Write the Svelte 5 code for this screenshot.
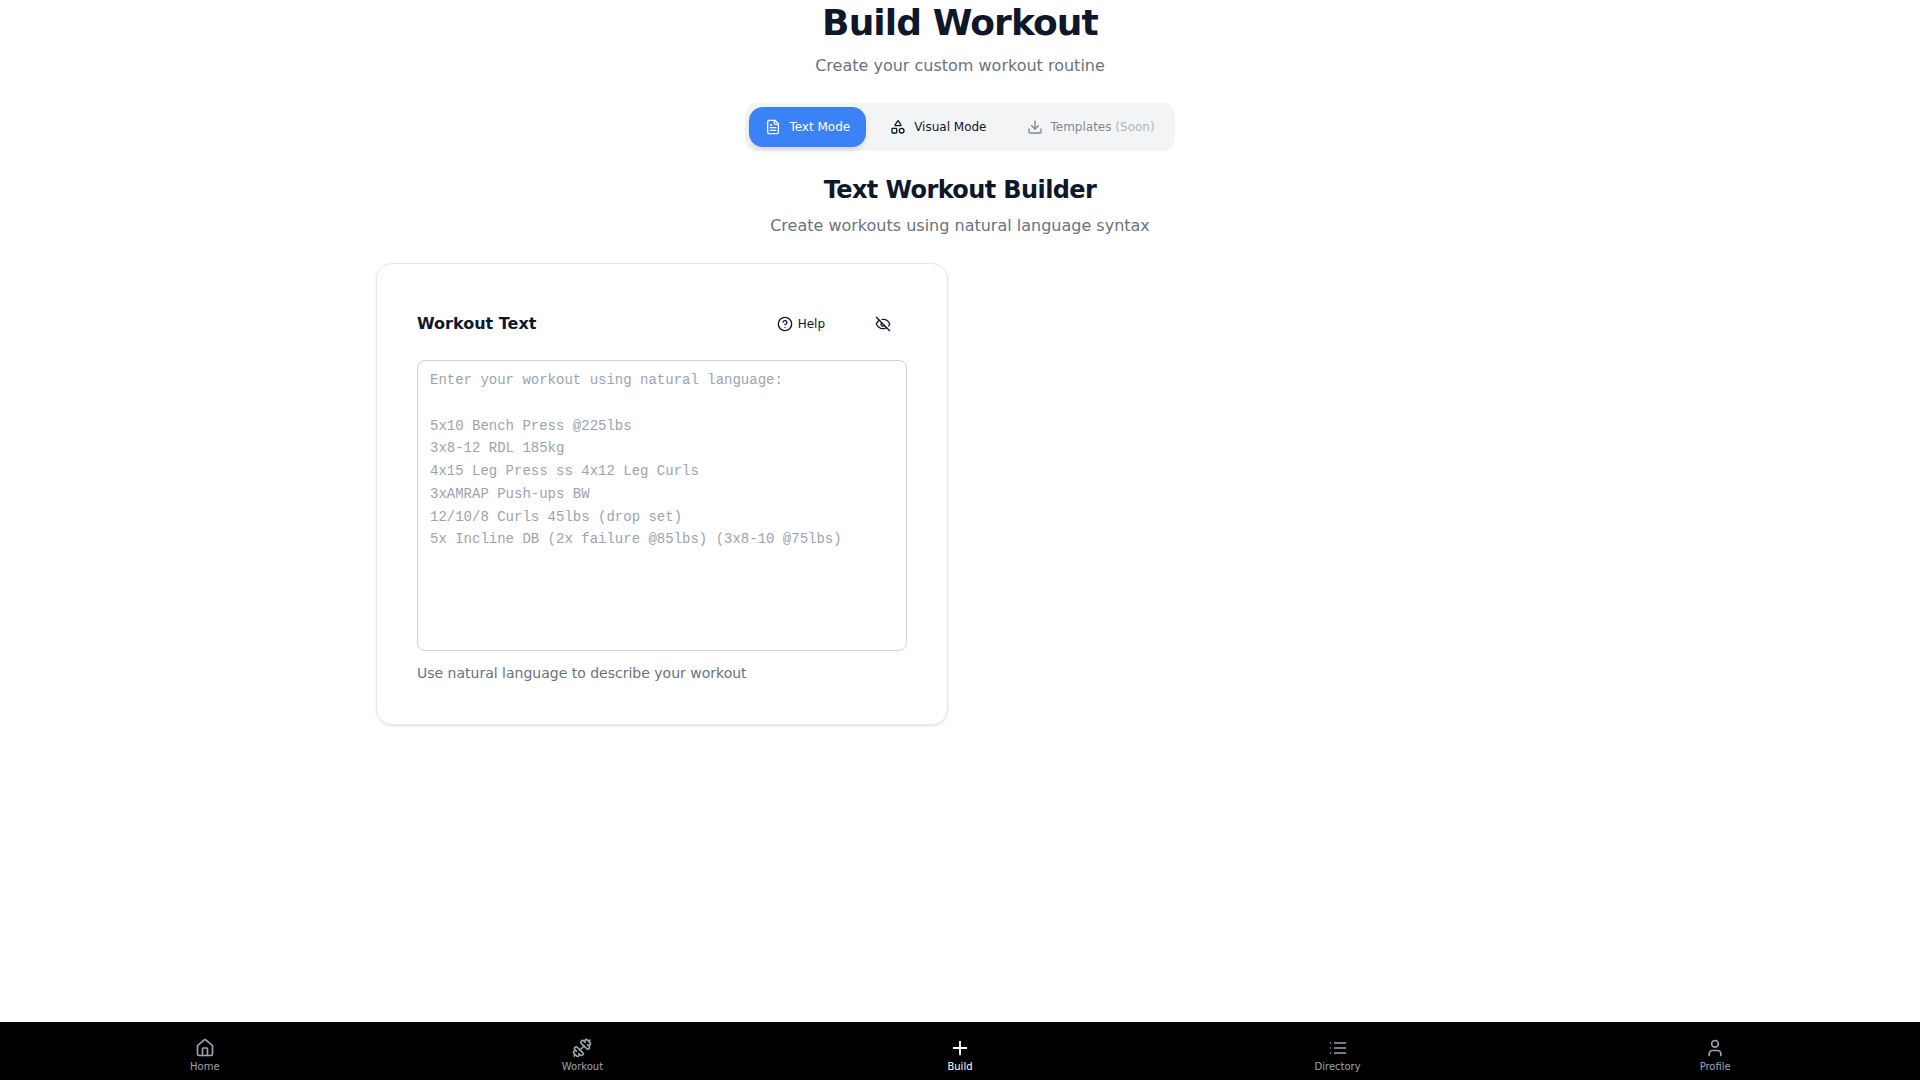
<script>
  let mode = $state('text');
  let workout = $state('');
  const example = [
    'Enter your workout using natural language:',
    '',
    '5x10 Bench Press @225lbs',
    '3x8-12 RDL 185kg',
    '4x15 Leg Press ss 4x12 Leg Curls',
    '3xAMRAP Push-ups BW',
    '12/10/8 Curls 45lbs (drop set)',
    '5x Incline DB (2x failure @85lbs) (3x8-10 @75lbs)',
  ].join('\n');

  const nav = [
    { label: 'Home', icon: 'home' },
    { label: 'Workout', icon: 'dumbbell' },
    { label: 'Build', icon: 'plus' },
    { label: 'Directory', icon: 'list' },
    { label: 'Profile', icon: 'user' },
  ];

  const icons = {
    file: ['M15 2H6a2 2 0 0 0-2 2v16a2 2 0 0 0 2 2h12a2 2 0 0 0 2-2V7Z', 'M14 2v4a2 2 0 0 0 2 2h4', 'M10 9H8', 'M16 13H8', 'M16 17H8'],
    shapes: ['M8.3 10a.7.7 0 0 1-.626-1.079L11.4 3a.7.7 0 0 1 1.198-.043L16.3 8.9a.7.7 0 0 1-.572 1.1Z', 'M4 14h5a1 1 0 0 1 1 1v5a1 1 0 0 1-1 1H4a1 1 0 0 1-1-1v-5a1 1 0 0 1 1-1Z', 'M14 17.5a3.5 3.5 0 1 0 7 0a3.5 3.5 0 1 0-7 0'],
    download: ['M21 15v4a2 2 0 0 1-2 2H5a2 2 0 0 1-2-2v-4', 'm7 10 5 5 5-5', 'M12 15V3'],
    help: ['M2 12a10 10 0 1 0 20 0a10 10 0 1 0-20 0', 'M9.09 9a3 3 0 0 1 5.83 1c0 2-3 3-3 3', 'M12 17h.01'],
    eyeOff: ['M10.733 5.076a10.744 10.744 0 0 1 11.205 6.575 1 1 0 0 1 0 .696 10.747 10.747 0 0 1-1.444 2.49', 'M14.084 14.158a3 3 0 0 1-4.242-4.242', 'M17.479 17.499a10.75 10.75 0 0 1-15.417-5.151 1 1 0 0 1 0-.696 10.75 10.75 0 0 1 4.446-5.143', 'm2 2 20 20'],
    home: ['M15 21v-8a1 1 0 0 0-1-1h-4a1 1 0 0 0-1 1v8', 'M3 10a2 2 0 0 1 .709-1.528l7-5.999a2 2 0 0 1 2.582 0l7 5.999A2 2 0 0 1 21 10v9a2 2 0 0 1-2 2H5a2 2 0 0 1-2-2z'],
    dumbbell: ['M17.596 12.768a2 2 0 1 0 2.829-2.829l-1.768-1.767a2 2 0 0 0 2.828-2.829l-2.828-2.828a2 2 0 0 0-2.829 2.828l-1.767-1.768a2 2 0 1 0-2.829 2.829z', 'm2.5 21.5 1.4-1.4', 'm20.1 3.9 1.4-1.4', 'M5.343 21.485a2 2 0 1 0 2.829-2.828l1.767 1.768a2 2 0 1 0 2.829-2.829l-6.364-6.364a2 2 0 1 0-2.829 2.829l1.768 1.767a2 2 0 0 0-2.828 2.829z', 'm9.6 14.4 4.8-4.8'],
    plus: ['M5 12h14', 'M12 5v14'],
    list: ['M3 12h.01', 'M3 18h.01', 'M3 6h.01', 'M8 12h13', 'M8 18h13', 'M8 6h13'],
    user: ['M19 21v-2a4 4 0 0 0-4-4H9a4 4 0 0 0-4 4v2', 'M8 7a4 4 0 1 0 8 0a4 4 0 1 0-8 0'],
  };
</script>

{#snippet icon(name)}
  <svg class="icon icon-{name}" viewBox="0 0 24 24" aria-hidden="true">
    {#each icons[name] as d}<path {d} />{/each}
  </svg>
{/snippet}

<div class="page">
  <main>
    <header>
      <h1>Build Workout</h1>
      <p>Create your custom workout routine</p>
    </header>

    <div class="tabs">
      <button class:active={mode === 'text'} onclick={() => (mode = 'text')}>{@render icon('file')}Text Mode</button>
      <button class:active={mode === 'visual'} onclick={() => (mode = 'visual')}>{@render icon('shapes')}Visual Mode</button>
      <button disabled>{@render icon('download')}<span>Templates <span class="soon">(Soon)</span></span></button>
    </div>

    <section class="builder">
      <header>
        <h2>Text Workout Builder</h2>
        <p>Create workouts using natural language syntax</p>
      </header>
      <div class="columns">
        <div class="card">
          <div class="card-head">
            <h3><label for="workout">Workout Text</label></h3>
            <div class="actions">
              <button>{@render icon('help')}Help</button>
              <button aria-label="Toggle preview">{@render icon('eyeOff')}</button>
            </div>
          </div>
          <textarea id="workout" rows="12" placeholder={example} bind:value={workout}></textarea>
          <p class="hint">Use natural language to describe your workout</p>
        </div>
      </div>
    </section>
  </main>

  <nav>
    {#each nav as item}
      <a href="#{item.label.toLowerCase()}" class:current={item.label === 'Build'}>
        {@render icon(item.icon)}
        <span>{item.label}</span>
      </a>
    {/each}
  </nav>
</div>

<style>
  :global(body) {
    margin: 0;
    background: #fff;
  }
  .page {
    min-height: 100vh;
    display: flex;
    flex-direction: column;
    font-family: 'DejaVu Sans', sans-serif;
    font-size: 16px;
    line-height: 26px;
    color: #0f172a;
  }
  .page * {
    box-sizing: border-box;
  }
  h1, h2, h3, p {
    margin: 0;
  }
  button {
    font: inherit;
    color: inherit;
    background: none;
    border: 0;
    cursor: pointer;
  }
  .icon {
    width: 16px;
    height: 16px;
    flex: none;
    fill: none;
    stroke: currentColor;
    stroke-width: 2;
    stroke-linecap: round;
    stroke-linejoin: round;
  }
  main {
    flex: 1;
    width: 100%;
    max-width: 1200px;
    margin: 0 auto;
    padding: 0 16px 24px;
    display: flex;
    flex-direction: column;
    gap: 24px;
  }
  header {
    display: flex;
    flex-direction: column;
    gap: 8px;
    text-align: center;
  }
  header p {
    color: #6b7280;
  }
  h1 {
    font-size: 36px;
    line-height: 45px;
    letter-spacing: -0.025em;
  }
  h2 {
    font-size: 24px;
    line-height: 30px;
    letter-spacing: -0.025em;
  }
  h3 {
    font-size: 16px;
    line-height: 24px;
  }
  .tabs {
    align-self: center;
    display: flex;
    gap: 8px;
    padding: 4px;
    border-radius: 12px;
    background: #f3f4f6;
  }
  .tabs button {
    display: flex;
    align-items: center;
    gap: 8px;
    height: 40px;
    padding: 0 16px;
    border-radius: 14px;
    font-size: 12px;
    font-weight: 500;
  }
  .tabs .active {
    background: #3b82f6;
    color: #fff;
    box-shadow: 0 4px 6px -1px rgb(0 0 0 / 0.1), 0 2px 4px -2px rgb(0 0 0 / 0.1);
  }
  .tabs button:disabled {
    opacity: 0.5;
    cursor: default;
  }
  .soon {
    opacity: 0.6;
  }
  .builder {
    display: flex;
    flex-direction: column;
    gap: 24px;
  }
  .columns {
    display: grid;
    grid-template-columns: 1fr 1fr;
    gap: 24px;
  }
  .card {
    padding: 40px;
    border: 1px solid #e5e7eb;
    border-radius: 16px;
    box-shadow: 0 1px 3px rgb(0 0 0 / 0.1), 0 1px 2px -1px rgb(0 0 0 / 0.1);
  }
  .card-head {
    display: flex;
    align-items: center;
    justify-content: space-between;
    margin-bottom: 16px;
  }
  .actions {
    display: flex;
    gap: 18px;
  }
  .actions button {
    display: flex;
    align-items: center;
    gap: 5px;
    height: 40px;
    padding: 0 16px;
    font-size: 12px;
  }
  textarea {
    display: block;
    width: 100%;
    padding: 8px 12px;
    border: 1px solid #d1d5db;
    border-radius: 8px;
    background: #fff;
    color: inherit;
    font-family: 'Liberation Mono', monospace;
    font-size: 14px;
    line-height: 1.625;
    resize: none;
  }
  textarea::placeholder {
    color: #9ca3af;
  }
  .hint {
    margin-top: 12px;
    font-size: 14px;
    line-height: 21px;
    color: #6b7280;
  }
  nav {
    display: flex;
    padding: 0 16px;
    background: #000;
  }
  nav a {
    flex: 1;
    display: flex;
    flex-direction: column;
    align-items: center;
    gap: 2px;
    padding: 16px 0 6px;
    color: #9ca3af;
    font-size: 10px;
    line-height: 14px;
    text-decoration: none;
  }
  nav .icon {
    width: 20px;
    height: 20px;
  }
  nav .current {
    color: #fff;
  }
  nav .current :global(.icon) {
    transform: scale(1.1);
  }
</style>
